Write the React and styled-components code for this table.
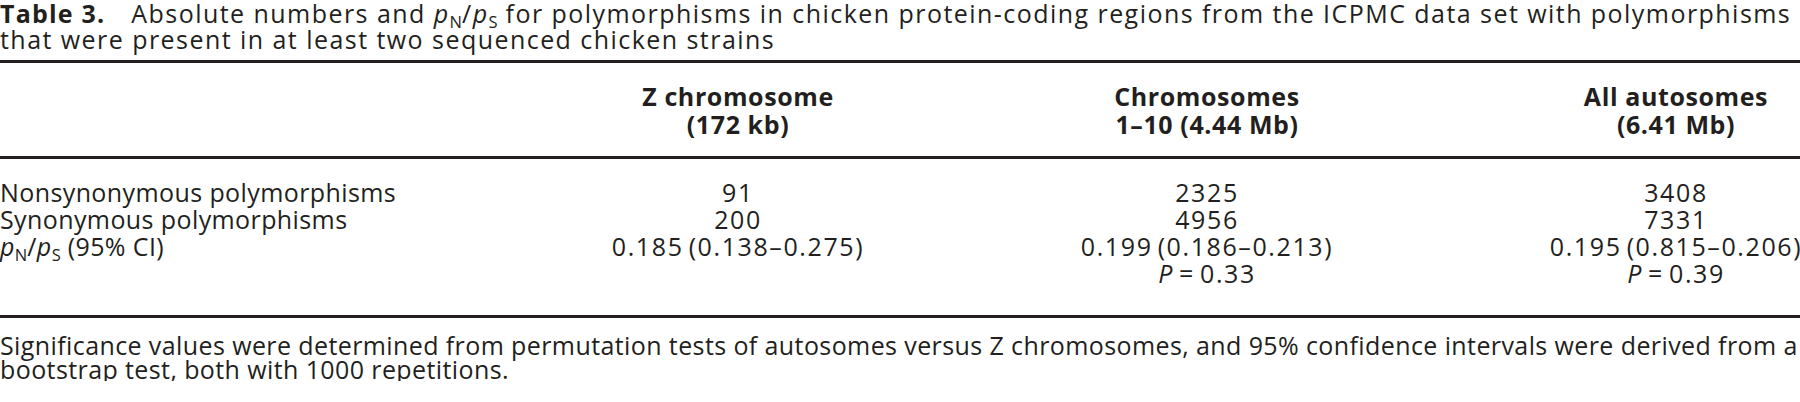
import React from "react";
import styled, { createGlobalStyle } from "styled-components";

const Global = createGlobalStyle`
  html, body { margin: 0; padding: 0; background: #fff; }
  body { font-family: "Open Sans", "Liberation Sans", sans-serif; color: #231f20; }
`;

const Page = styled.div`
  width: 1800px;
`;

const Caption = styled.div`
  font-size: 25px;
  line-height: 26px;
  letter-spacing: 1.45px;
  white-space: nowrap;
  padding-bottom: 8px;
`;

const Label = styled.span`
  font-weight: 700;
  letter-spacing: 1.2px;
  margin-right: 26px;
`;

const Table = styled.div`
  display: grid;
  grid-template-columns: 614px 248px 690px 248px;
  border-top: 3px solid #231f20;
  border-bottom: 3px solid #231f20;
  font-size: 25px;
`;

const HeadCell = styled.div`
  font-weight: 700;
  line-height: 28px;
  letter-spacing: 0.6px;
  text-align: center;
  white-space: nowrap;
  padding: 19px 0 18px;
  border-bottom: 3px solid #231f20;
`;

const Cell = styled.div`
  line-height: 27px;
  white-space: nowrap;
  display: flex;
  justify-content: ${(p) => (p.$label ? "flex-start" : "center")};
  letter-spacing: ${(p) => (p.$label ? "0.4px" : "1.6px")};
  word-spacing: ${(p) => (p.$label ? "0" : "-3px")};
  padding-top: ${(p) => (p.$first ? "20px" : "0")};
  padding-bottom: ${(p) => (p.$last ? "28px" : "0")};
`;

const Sub = styled.sub`
  font-size: 0.66em;
  vertical-align: -0.28em;
  line-height: 0;
  font-style: normal;
  letter-spacing: 0;
`;

const It = styled.i`
  font-style: italic;
`;

const Footnote = styled.p`
  margin: 0;
  padding-top: 15px;
  font-size: 25px;
  line-height: 24px;
  letter-spacing: 0.4px;
  white-space: nowrap;
`;

const Ratio = () => (
  <span>
    <It>p</It>
    <Sub>N</Sub>/<It>p</It>
    <Sub>S</Sub>
  </span>
);

const rows = [
  ["Nonsynonymous polymorphisms", "91", "2325", "3408"],
  ["Synonymous polymorphisms", "200", "4956", "7331"],
  [
    <span>
      <Ratio /> (95% CI)
    </span>,
    "0.185 (0.138–0.275)",
    "0.199 (0.186–0.213)",
    "0.195 (0.815–0.206)",
  ],
  [
    "",
    "",
    <span>
      <It>P</It> = 0.33
    </span>,
    <span>
      <It>P</It> = 0.39
    </span>,
  ],
];

export default function App() {
  return (
    <Page>
      <Global />
      <Caption>
        <Label>Table 3.</Label>Absolute numbers and <Ratio /> for polymorphisms in chicken
        protein-coding regions from the ICPMC data set with polymorphisms
        <br />
        that were present in at least two sequenced chicken strains
      </Caption>
      <Table>
        <HeadCell />
        <HeadCell>
          Z chromosome
          <br />
          (172 kb)
        </HeadCell>
        <HeadCell>
          Chromosomes
          <br />
          1–10 (4.44 Mb)
        </HeadCell>
        <HeadCell>
          All autosomes
          <br />
          (6.41 Mb)
        </HeadCell>
        {rows.map((r, i) =>
          r.map((c, j) => (
            <Cell
              key={`${i}-${j}`}
              $label={j === 0}
              $first={i === 0}
              $last={i === rows.length - 1}
            >
              {c}
            </Cell>
          ))
        )}
      </Table>
      <Footnote>
        Significance values were determined from permutation tests of autosomes versus Z
        chromosomes, and 95% confidence intervals were derived from a
        <br />
        bootstrap test, both with 1000 repetitions.
      </Footnote>
    </Page>
  );
}
